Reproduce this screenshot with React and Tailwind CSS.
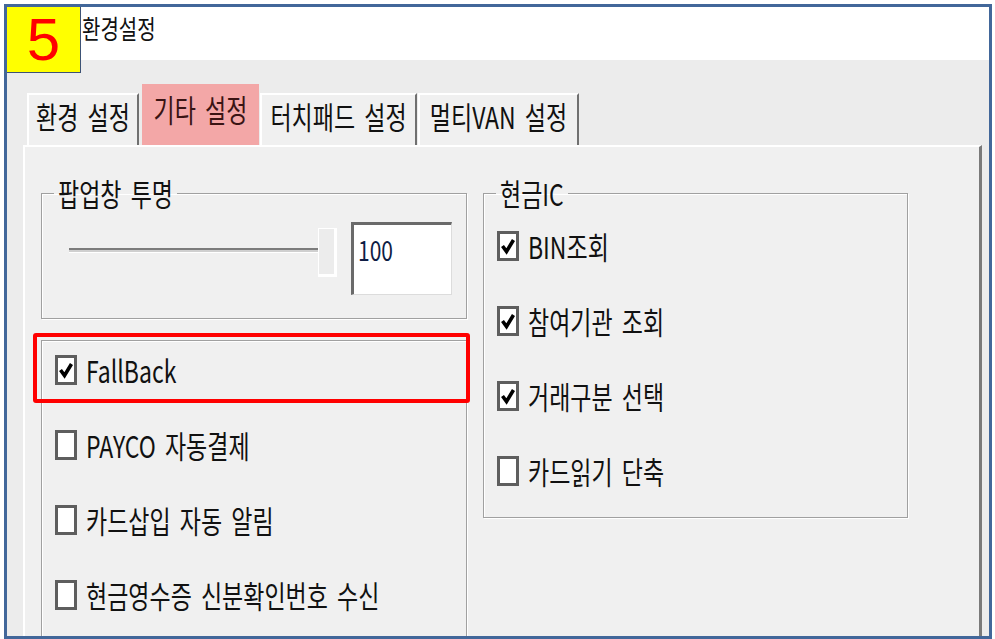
import React from 'react';

const FONT = "font-['Noto_Sans_CJK_KR','Noto_Sans',sans-serif]";

const T = ({ children, className = '' }) => (
  <span className={`inline-block origin-center scale-y-[1.32] whitespace-pre [word-spacing:4px] ${className}`}>{children}</span>
);

const CheckBox = ({ checked }) => (
  <div className="w-[22px] h-[30px] shrink-0 border-[3px] border-[#5e5e5e] bg-white flex items-center justify-center">
    {checked && (
      <svg width="14" height="20" viewBox="0 0 14 20">
        <polyline points="1.5,10 5.5,15.5 12.5,4" fill="none" stroke="#000" strokeWidth="3.6" />
      </svg>
    )}
  </div>
);

const CheckRow = ({ label, checked }) => (
  <div className="flex items-center h-[30px] gap-[9px]">
    <CheckBox checked={checked} />
    <T className="text-[23px] leading-[30px] text-[#111]">{label}</T>
  </div>
);

const Tab = ({ label, active, className = '' }) =>
  active ? (
    <div className={`h-[61px] bg-[#f3a7a7] flex items-start justify-center pt-[10px] ${className}`}>
      <T className="text-[23px] leading-[30px] text-[#3a1414]">{label}</T>
    </div>
  ) : (
    <div
      className={`h-[52px] bg-[#f0f0f0] border-t-2 border-l-2 border-white border-r-2 border-r-[#707070] flex items-start justify-center pt-[6px] ${className}`}
    >
      <T className="text-[23px] leading-[30px] text-[#111]">{label}</T>
    </div>
  );

const GroupBox = ({ title, className = '', children }) => (
  <fieldset
    className={`border border-[#a0a0a0] shadow-[inset_1px_1px_0_#fff,1px_1px_0_#fff] ${className}`}
  >
    {title && (
      <legend className="ml-[12px] px-[4px] h-[30px] leading-[30px]">
        <T className="text-[23px] leading-[30px] text-[#111]">{title}</T>
      </legend>
    )}
    {children}
  </fieldset>
);

export default function App() {
  return (
    <div className={`w-[995px] h-[639px] bg-white ${FONT}`}>
      <div className="ml-[4px] mt-[4px] w-[988px] h-[635px] border-[3px] border-[#42679a] relative overflow-hidden flex flex-col">
        {/* step badge */}
        <div className="absolute left-0 top-0 w-[74px] h-[66px] bg-[#ffff00] border-r border-b border-[#3d5275] flex items-center justify-center z-10">
          <span className="font-['Liberation_Sans',sans-serif] text-[60px] leading-[64px] text-[#ff0000]">5</span>
        </div>

        {/* title bar */}
        <div className="h-[53px] bg-white pl-[75px] pt-[6px] shrink-0">
          <T className="text-[20px] leading-[30px] text-[#111] scale-y-[1.4]">환경설정</T>
        </div>

        {/* body */}
        <div className="flex-1 bg-[#ececec] pt-[24px] pl-[16px] flex flex-col">
          {/* tabs */}
          <div className="flex items-end h-[61px] pl-[4px]">
            <Tab label="환경 설정" className="w-[112px]" />
            <Tab label="기타 설정" active className="w-[117px] ml-[3px]" />
            <Tab label="터치패드 설정" className="w-[157px] ml-[1px]" />
            <Tab label="멀티VAN 설정" className="w-[161px] ml-[1px]" />
          </div>

          {/* panel */}
          <div className="w-[959px] flex-1 bg-[#f0f0f0] border-t-2 border-l-2 border-white border-r-[3px] border-r-[#7a7a7a] pt-[31px] pl-[16px] flex gap-[16px]">
            {/* left column */}
            <div className="w-[426px] relative flex flex-col">
              <GroupBox title="팝업창 투명" className="h-[141px]">
                <div className="flex items-start pt-[14px] pl-[27px]">
                  <div className="w-[249px] h-[5px] mt-[26px] border-t-2 border-[#7c7c7c] border-b border-b-white bg-[#cfcfcf]" />
                  <div className="w-[19px] h-[49px] mt-[6px] bg-[#ececec] border-t border-l border-white border-r-[3px] border-b-[3px] border-[#6a6a6a]" />
                  <div className="w-[101px] h-[73px] ml-[14px] bg-white border-t-[3px] border-l-[3px] border-[#6a6a6a] border-b border-r border-b-[#dcdcdc] border-r-[#dcdcdc] pl-[4px] pt-[12px]">
                    <T className="text-[21px] leading-[24px] text-[#0f1d45]">100</T>
                  </div>
                </div>
              </GroupBox>

              <GroupBox className="h-[320px] mt-[21px]">
                <div className="flex flex-col gap-[45px] pt-[14px] pl-[13px]">
                  <CheckRow label="FallBack" checked />
                  <CheckRow label="PAYCO 자동결제" />
                  <CheckRow label="카드삽입 자동 알림" />
                  <CheckRow label="현금영수증 신분확인번호 수신" />
                </div>
              </GroupBox>

              {/* highlight */}
              <div className="absolute left-[-8px] top-[155px] w-[437px] h-[70px] border-[4px] border-[#ff0000] rounded-[3px]" />
            </div>

            {/* right column */}
            <div className="w-[425px]">
              <GroupBox title="현금IC" className="h-[340px]">
                <div className="flex flex-col gap-[45px] pt-[23px] pl-[13px]">
                  <CheckRow label="BIN조회" checked />
                  <CheckRow label="참여기관 조회" checked />
                  <CheckRow label="거래구분 선택" checked />
                  <CheckRow label="카드읽기 단축" />
                </div>
              </GroupBox>
            </div>
          </div>
        </div>
      </div>
    </div>
  );
}
